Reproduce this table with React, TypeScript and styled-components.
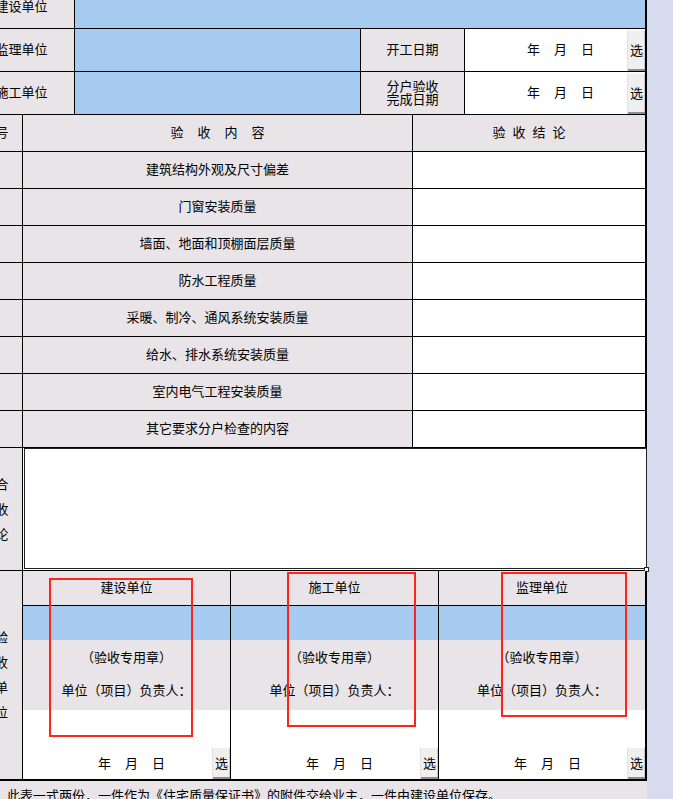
import React from "react";
import styled, { createGlobalStyle } from "styled-components";

const GRAY = "#e8e4e8";
const BLUE = "#a6caf0";
const LINE = "#000";

type Tone = "gray" | "blue" | "white";
const toneColor = (t?: Tone) => (t === "blue" ? BLUE : t === "white" ? "#ffffff" : GRAY);

const Global = createGlobalStyle`
  html, body { margin: 0; padding: 0; background: #d6dcee; overflow: hidden; }
  body {
    font-family: "Noto Sans CJK SC", "Liberation Sans", sans-serif;
    font-size: 13px;
    color: #000;
  }
`;

const Page = styled.div`
  margin: -15px 0 0 -31px;
  width: 678px;
`;

const Sheet = styled.div`
  width: 676px;
  border-right: 2px solid ${LINE};
  border-bottom: 2px solid ${LINE};
  background: ${GRAY};
`;

const Row = styled.div<{ $h: number; $open?: boolean }>`
  display: flex;
  position: relative;
  box-sizing: border-box;
  height: ${(p) => p.$h}px;
  border-bottom: ${(p) => (p.$open ? "none" : `1px solid ${LINE}`)};
`;

const Cell = styled.div<{ $w?: number; $tone?: Tone; $last?: boolean }>`
  box-sizing: border-box;
  ${(p) => (p.$w ? `width: ${p.$w}px; flex: none;` : `flex: 1; min-width: 0;`)}
  background: ${(p) => toneColor(p.$tone)};
  border-right: ${(p) => (p.$last ? "none" : `1px solid ${LINE}`)};
  display: flex;
  align-items: center;
  justify-content: center;
  padding-bottom: 2px;
  white-space: nowrap;
  line-height: 16px;
`;

const Stack = styled.div<{ $lh: number; $shift?: number }>`
  line-height: ${(p) => p.$lh}px;
  text-align: center;
  padding-left: ${(p) => p.$shift ?? 0}px;
`;

const Spaced = styled.span<{ $gap: number }>`
  letter-spacing: ${(p) => p.$gap}px;
  padding-left: ${(p) => p.$gap}px;
`;

const DateCell = styled(Cell)`
  justify-content: flex-start;
  padding-bottom: 0;
`;

const DateText = styled.div<{ $offset: number }>`
  display: flex;
  gap: 14px;
  margin: 0 0 2px ${(p) => p.$offset}px;
`;

const SelectButton = styled.button<{ $h: number }>`
  flex: none;
  box-sizing: border-box;
  width: 18px;
  height: ${(p) => p.$h}px;
  margin: 0 0 0 auto;
  align-self: flex-end;
  padding: 0 0 2px;
  font: inherit;
  font-size: 13px;
  color: #000;
  background: #efefef;
  border: none;
  border-left: 1px solid #e2e2e2;
  border-top: 1px solid #fafafa;
  box-shadow: inset 0 -2px 0 #8e8e8e, inset -1px 0 0 #c8c8c8;
  display: flex;
  align-items: center;
  justify-content: center;
`;

const NoteCell = styled(Cell)`
  position: relative;
  align-items: flex-start;
  justify-content: flex-start;
  padding-bottom: 0;
`;

const NoteArea = styled.textarea`
  flex: none;
  display: block;
  box-sizing: border-box;
  margin: 0 0 0 1px;
  width: calc(100% + 1px);
  height: 121px;
  padding: 0;
  border: 1px solid #222;
  background: #fff;
  resize: none;
  outline: none;
`;

const Grip = styled.span`
  position: absolute;
  left: 621px;
  top: 119px;
  width: 5px;
  height: 5px;
  box-sizing: border-box;
  border: 1px solid #222;
  background: #fff;
`;

const SignCol = styled.div<{ $w?: number; $last?: boolean }>`
  box-sizing: border-box;
  ${(p) => (p.$w ? `width: ${p.$w}px; flex: none;` : `flex: 1; min-width: 0;`)}
  border-right: ${(p) => (p.$last ? "none" : `1px solid ${LINE}`)};
  display: flex;
  flex-direction: column;
`;

const SignTitle = styled.div`
  box-sizing: border-box;
  height: 35px;
  padding-bottom: 3px;
  border-bottom: 1px solid ${LINE};
  background: ${GRAY};
  display: flex;
  align-items: center;
  justify-content: center;
`;

const SignStamp = styled.div`
  height: 34px;
  background: ${BLUE};
`;

const SignNote = styled.div`
  box-sizing: border-box;
  height: 70px;
  padding-top: 0;
  background: ${GRAY};
  display: flex;
  flex-direction: column;
  align-items: center;
  line-height: 33px;
  white-space: nowrap;
`;

const SignDate = styled.div`
  flex: 1;
  background: #fff;
  display: flex;
  flex-direction: column;
`;

const DateRow = styled.div`
  margin-top: auto;
  height: 32px;
  display: flex;
  align-items: center;
`;

const Marker = styled.div<{ $x: number; $y: number; $w: number; $h: number }>`
  position: absolute;
  left: ${(p) => p.$x}px;
  top: ${(p) => p.$y}px;
  width: ${(p) => p.$w}px;
  height: ${(p) => p.$h}px;
  box-sizing: border-box;
  border: 2px solid #ff2318;
  pointer-events: none;
`;

const Footnote = styled.div`
  box-sizing: border-box;
  height: 40px;
  padding: 4px 0 0 38px;
  background: ${GRAY};
  line-height: 19px;
  white-space: nowrap;
`;

const items = [
  "建筑结构外观及尺寸偏差",
  "门窗安装质量",
  "墙面、地面和顶棚面层质量",
  "防水工程质量",
  "采暖、制冷、通风系统安装质量",
  "给水、排水系统安装质量",
  "室内电气工程安装质量",
  "其它要求分户检查的内容",
];

const signers = [
  { name: "建设单位", w: 208 },
  { name: "施工单位", w: 208 },
  { name: "监理单位" },
];

const markers = [
  { x: 80, y: 7, w: 144, h: 159 },
  { x: 318, y: 1, w: 129, h: 155 },
  { x: 532, y: 1, w: 126, h: 145 },
];

const YMD = () => (
  <>
    <span>年</span>
    <span>月</span>
    <span>日</span>
  </>
);

export default function App() {
  return (
    <>
      <Global />
      <Page>
        <Sheet>
          <Row $h={44}>
            <Cell $w={106}>建设单位</Cell>
            <Cell $tone="blue" $last />
          </Row>
          <Row $h={43}>
            <Cell $w={106}>监理单位</Cell>
            <Cell $w={286} $tone="blue" />
            <Cell $w={104}>开工日期</Cell>
            <DateCell $tone="white" $last>
              <DateText $offset={62}>
                <YMD />
              </DateText>
              <SelectButton $h={41}>选</SelectButton>
            </DateCell>
          </Row>
          <Row $h={43}>
            <Cell $w={106}>施工单位</Cell>
            <Cell $w={286} $tone="blue" />
            <Cell $w={104}>
              <Stack $lh={13}>
                分户验收
                <br />
                完成日期
              </Stack>
            </Cell>
            <DateCell $tone="white" $last>
              <DateText $offset={62}>
                <YMD />
              </DateText>
              <SelectButton $h={41}>选</SelectButton>
            </DateCell>
          </Row>
          <Row $h={37}>
            <Cell $w={54}>序号</Cell>
            <Cell $w={390}>
              <Spaced $gap={14}>验收内容</Spaced>
            </Cell>
            <Cell $last>
              <Spaced $gap={7}>验收结论</Spaced>
            </Cell>
          </Row>
          {items.map((text, i) => (
            <Row $h={37} key={text}>
              <Cell $w={54}>{i + 1}</Cell>
              <Cell $w={390}>{text}</Cell>
              <Cell $tone="white" $last />
            </Row>
          ))}
          <Row $h={123}>
            <Cell $w={54}>
              <Stack $lh={25}>
                综合
                <br />
                验收
                <br />
                结论
              </Stack>
            </Cell>
            <NoteCell $tone="white" $last>
              <NoteArea aria-label="综合验收结论" />
              <Grip />
            </NoteCell>
          </Row>
          <Row $h={208} $open>
            <Cell $w={54}>
              <Stack $lh={25} $shift={12}>
                验
                <br />
                收
                <br />
                单
                <br />
                位
              </Stack>
            </Cell>
            {signers.map((s, i) => (
              <SignCol key={s.name} $w={s.w} $last={i === signers.length - 1}>
                <SignTitle>{s.name}</SignTitle>
                <SignStamp />
                <SignNote>
                  <span>（验收专用章）</span>
                  <span>单位（项目）负责人：</span>
                </SignNote>
                <SignDate>
                  <DateRow>
                    <DateText $offset={75}>
                      <YMD />
                    </DateText>
                    <SelectButton $h={32}>选</SelectButton>
                  </DateRow>
                </SignDate>
              </SignCol>
            ))}
            {markers.map((m, i) => (
              <Marker key={i} $x={m.x} $y={m.y} $w={m.w} $h={m.h} />
            ))}
          </Row>
        </Sheet>
        <Footnote>
          此表一式两份，一件作为《住宅质量保证书》的附件交给业主，一件由建设单位保存。
        </Footnote>
      </Page>
    </>
  );
}
